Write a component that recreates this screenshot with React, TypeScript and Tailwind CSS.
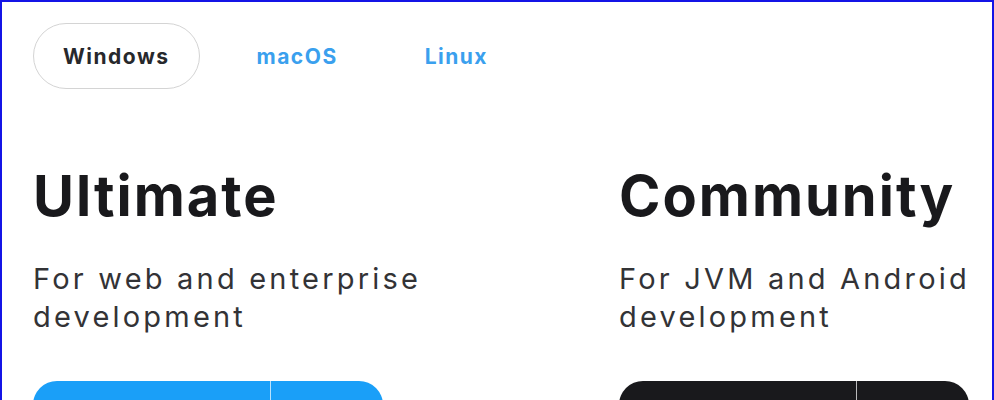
const tabs = ["Windows", "macOS", "Linux"];

const editions = [
  {
    name: "Ultimate",
    text: "For web and enterprise development",
    button: "bg-[#1a9ff8]",
  },
  {
    name: "Community",
    text: "For JVM and Android development",
    button: "bg-[#19191c]",
  },
];

export default function App() {
  return (
    <div className="h-[400px] w-[994px] overflow-hidden bg-white font-['Inter',sans-serif]">
      <div className="h-[600px] overflow-hidden border-2 border-[#1414e6] pl-[31px] pt-[21px]">
        <div className="flex gap-[27px]">
          {tabs.map((tab, i) => (
            <button
              key={tab}
              className={
                i === 0
                  ? "h-[66px] rounded-full border border-[#d4d4d4] px-[29px] pt-[2px] text-[21px] font-bold tracking-[1.5px] text-[#27282c]"
                  : "h-[66px] rounded-full border border-transparent px-[29px] pt-[2px] text-[21px] font-bold tracking-[1.5px] text-[#3aa0ee]"
              }
            >
              {tab}
            </button>
          ))}
        </div>

        <div className="mt-[73px] grid grid-cols-[554px_554px] gap-x-8">
          {editions.map((ed) => (
            <div key={ed.name}>
              <h2 className="text-[56px] font-bold leading-[68px] tracking-[2px] text-[#19191c]">
                {ed.name}
              </h2>
              <p className="mt-[30px] w-[440px] text-[29px] leading-[38px] tracking-[3.2px] text-[#333336]">
                {ed.text}
              </p>
              {/* download split button, only its top shows */}
              <div
                className={`mt-[45px] flex h-14 w-[350px] overflow-hidden rounded-3xl ${ed.button}`}
              >
                <span className="w-[238px] border-r border-white/70" />
                <span className="flex-1" />
              </div>
            </div>
          ))}
        </div>
      </div>
    </div>
  );
}
